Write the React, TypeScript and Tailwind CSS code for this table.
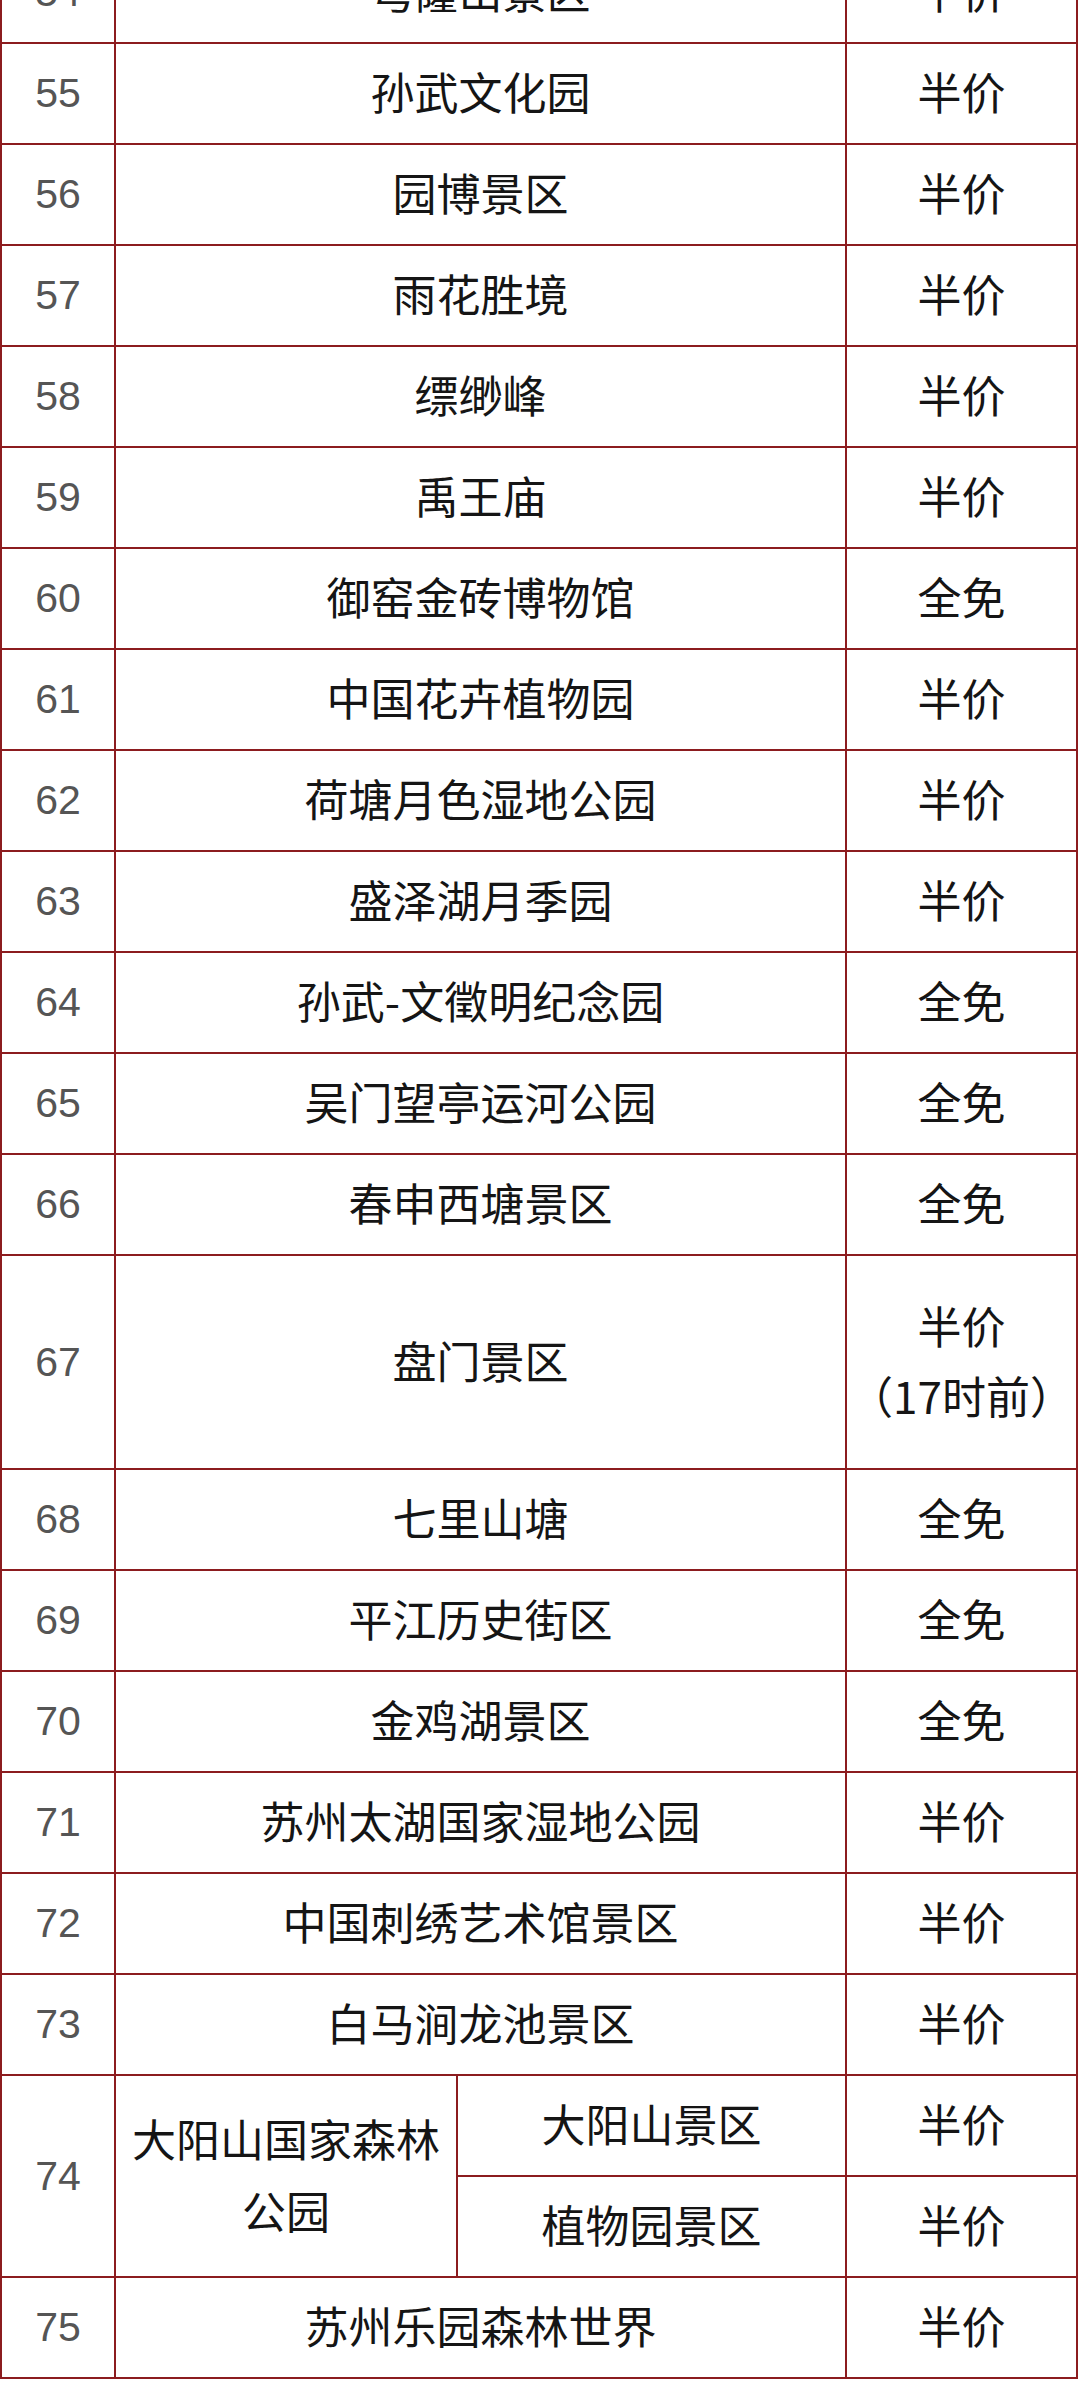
type Row = {
  no: string;
  name: string;
  price: string;
};

const rowsTop: Row[] = [
  { no: "54", name: "穹窿山景区", price: "半价" },
  { no: "55", name: "孙武文化园", price: "半价" },
  { no: "56", name: "园博景区", price: "半价" },
  { no: "57", name: "雨花胜境", price: "半价" },
  { no: "58", name: "缥缈峰", price: "半价" },
  { no: "59", name: "禹王庙", price: "半价" },
  { no: "60", name: "御窑金砖博物馆", price: "全免" },
  { no: "61", name: "中国花卉植物园", price: "半价" },
  { no: "62", name: "荷塘月色湿地公园", price: "半价" },
  { no: "63", name: "盛泽湖月季园", price: "半价" },
  { no: "64", name: "孙武-文徵明纪念园", price: "全免" },
  { no: "65", name: "吴门望亭运河公园", price: "全免" },
  { no: "66", name: "春申西塘景区", price: "全免" },
];

const rowsMid: Row[] = [
  { no: "68", name: "七里山塘", price: "全免" },
  { no: "69", name: "平江历史街区", price: "全免" },
  { no: "70", name: "金鸡湖景区", price: "全免" },
  { no: "71", name: "苏州太湖国家湿地公园", price: "半价" },
  { no: "72", name: "中国刺绣艺术馆景区", price: "半价" },
  { no: "73", name: "白马涧龙池景区", price: "半价" },
];

const cell = "flex items-center justify-center bg-white text-center";
const numCls = `${cell} text-[41px] text-[#555] font-['Liberation_Sans',sans-serif]`;
const textCls = `${cell} pb-[5px] text-[44px] text-[#151515]`;

function SimpleRow({ row }: { row: Row }) {
  return (
    <>
      <div className={`${numCls} h-[99px]`}>{row.no}</div>
      <div className={`${textCls} col-span-2 h-[99px]`}>{row.name}</div>
      <div className={`${textCls} h-[99px]`}>{row.price}</div>
    </>
  );
}

export default function App() {
  return (
    <div
      className="w-[1080px] overflow-hidden bg-white"
      style={{ fontFamily: "'Noto Sans CJK SC', 'Noto Sans', sans-serif" }}
    >
      <div className="-mt-[59px] grid w-[1078px] grid-cols-[112px_340px_387px_229px] gap-[2px] bg-[#8c1c1f] p-[2px] leading-none">
        {rowsTop.map((r) => (
          <SimpleRow key={r.no} row={r} />
        ))}

        <div className={`${numCls} h-[212px]`}>67</div>
        <div className={`${textCls} col-span-2 h-[212px]`}>盘门景区</div>
        <div className={`${textCls} h-[212px] flex-col leading-[70px]`}>
          <span>半价</span>
          <span>（17时前）</span>
        </div>

        {rowsMid.map((r) => (
          <SimpleRow key={r.no} row={r} />
        ))}

        <div className={`${numCls} row-span-2`}>74</div>
        <div className={`${textCls} row-span-2 px-4 leading-[72px]`}>
          大阳山国家森林公园
        </div>
        <div className={`${textCls} h-[99px]`}>大阳山景区</div>
        <div className={`${textCls} h-[99px]`}>半价</div>
        <div className={`${textCls} h-[99px]`}>植物园景区</div>
        <div className={`${textCls} h-[99px]`}>半价</div>

        <SimpleRow row={{ no: "75", name: "苏州乐园森林世界", price: "半价" }} />
      </div>
    </div>
  );
}
